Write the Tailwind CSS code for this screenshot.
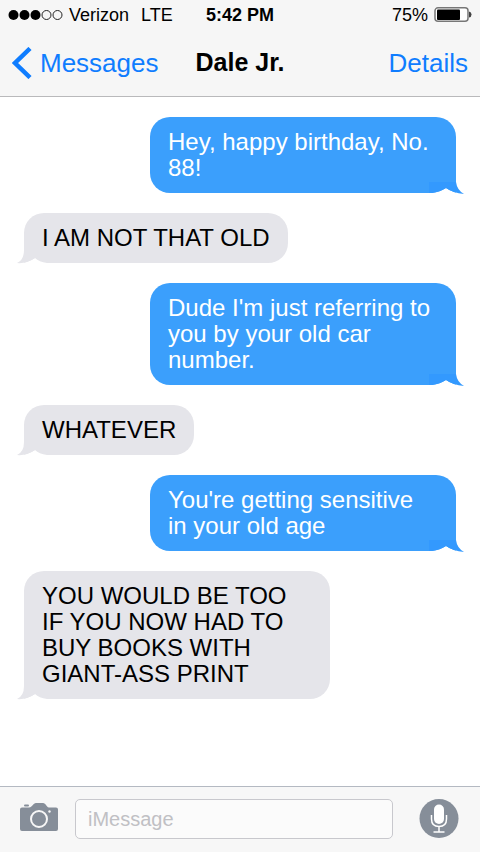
<!DOCTYPE html>
<html lang="en">

<head>
    <meta charset="UTF-8">
    <meta name="viewport" content="width=device-width, initial-scale=1.0">
    <title>Messages - Dale Jr.</title>
    <script src="https://cdn.jsdelivr.net/npm/@tailwindcss/browser@4"></script>
</head>

<body class="flex min-h-screen flex-col bg-white font-['Liberation_Sans',Arial,sans-serif] text-black">
    <header class="border-b border-[#b9b9bb] bg-[#f6f6f6]">
        <!-- status bar -->
        <div class="grid h-[30px] grid-cols-[1fr_auto_1fr] items-center px-2 text-lg">
            <div class="flex items-center">
                <svg class="mr-1.5" width="55" height="12" viewBox="0 0 55 12">
                    <g fill="#000">
                        <circle cx="5.5" cy="6" r="5" />
                        <circle cx="16.5" cy="6" r="5" />
                        <circle cx="27.5" cy="6" r="5" />
                    </g>
                    <g fill="none" stroke="#222">
                        <circle cx="38.5" cy="6" r="4.5" />
                        <circle cx="49.5" cy="6" r="4.5" />
                    </g>
                </svg>
                <span class="mr-3">Verizon</span>
                <span>LTE</span>
            </div>
            <span class="font-bold">5:42 PM</span>
            <div class="flex items-center justify-end gap-1.5">
                <span>75%</span>
                <svg width="38" height="16" viewBox="0 1 38 16">
                    <rect x="1" y="1.8" width="33" height="13.500" rx="3" fill="#fff" stroke="#777" stroke-width="1.5" />
                    <rect x="3" y="3.500" width="23" height="10.500" rx="1" fill="#000" />
                    <path d="M35 5.500Q37.500 6 37.500 8.500T35 11.500Z" fill="#444" />
                </svg>
            </div>
        </div>
        <nav class="grid h-[66px] grid-cols-[1fr_auto_1fr] items-center px-3 text-[26px] text-[#0f7dff]">
            <a href="#" class="flex items-center gap-2">
                <svg width="20" height="32" viewBox="0 0 20 32" fill="none" stroke="#0f7dff" stroke-width="4.500">
                    <path d="M18 1.500L3 16L18 30.500" />
                </svg>
                <span>Messages</span>
            </a>
            <h1 class="text-[25px] font-bold text-black">Dale Jr.</h1>
            <a href="#" class="justify-self-end">Details</a>
        </nav>
    </header>

    <main class="flex flex-1 flex-col items-start gap-5 px-6 py-5 text-2xl leading-[26px]">
        <p class="relative max-w-[306px] self-end rounded-[20px] rounded-br-none bg-[#3b9ffc] px-[18px] py-3 text-white">
            Hey, happy birthday, No. 88!
            <svg class="absolute -right-[9px] -bottom-px" width="36" height="12" viewBox="0 0 36 12">
                <path d="M3 12V11Q11 10 17 6Q24 11 35 12Z" fill="#fff" />
                <path d="M0 0H27Q28 8 35 12Q24 11 17 6Q11 10 3 11H0Z" fill="#3399fe" />
            </svg>
        </p>
        <p class="relative max-w-[306px] rounded-[20px] rounded-bl-none bg-[#e5e5ea] px-[18px] py-3">
            I AM NOT THAT OLD
            <svg class="absolute -bottom-px -left-[7px]" width="30" height="14" viewBox="0 0 30 14">
                <path d="M0 14Q11 13 18 8Q22 12 30 13V14Z" fill="#fff" />
                <path d="M7 0Q7 10 0 13Q9 14 18 8L12 0Z" fill="#e5e5ea" />
            </svg>
        </p>
        <p class="relative max-w-[306px] self-end rounded-[20px] rounded-br-none bg-[#3b9ffc] px-[18px] py-3 text-white">
            Dude I'm just referring to you by your old car number.
            <svg class="absolute -right-[9px] -bottom-px" width="36" height="12" viewBox="0 0 36 12">
                <path d="M3 12V11Q11 10 17 6Q24 11 35 12Z" fill="#fff" />
                <path d="M0 0H27Q28 8 35 12Q24 11 17 6Q11 10 3 11H0Z" fill="#3399fe" />
            </svg>
        </p>
        <p class="relative max-w-[306px] rounded-[20px] rounded-bl-none bg-[#e5e5ea] px-[18px] py-3">
            WHATEVER
            <svg class="absolute -bottom-px -left-[7px]" width="30" height="14" viewBox="0 0 30 14">
                <path d="M0 14Q11 13 18 8Q22 12 30 13V14Z" fill="#fff" />
                <path d="M7 0Q7 10 0 13Q9 14 18 8L12 0Z" fill="#e5e5ea" />
            </svg>
        </p>
        <p class="relative max-w-[306px] self-end rounded-[20px] rounded-br-none bg-[#3b9ffc] px-[18px] py-3 text-white">
            You're getting sensitive in your old age
            <svg class="absolute -right-[9px] -bottom-px" width="36" height="12" viewBox="0 0 36 12">
                <path d="M3 12V11Q11 10 17 6Q24 11 35 12Z" fill="#fff" />
                <path d="M0 0H27Q28 8 35 12Q24 11 17 6Q11 10 3 11H0Z" fill="#3399fe" />
            </svg>
        </p>
        <p class="relative max-w-[306px] rounded-[20px] rounded-bl-none bg-[#e5e5ea] px-[18px] py-3">
            YOU WOULD BE TOO IF YOU NOW HAD TO BUY BOOKS WITH GIANT-ASS PRINT
            <svg class="absolute -bottom-px -left-[7px]" width="30" height="14" viewBox="0 0 30 14">
                <path d="M0 14Q11 13 18 8Q22 12 30 13V14Z" fill="#fff" />
                <path d="M7 0Q7 10 0 13Q9 14 18 8L12 0Z" fill="#e5e5ea" />
            </svg>
        </p>
    </main>

    <form class="flex items-center border-t border-[#b4b9c2] bg-[#f7f7f7] pt-3 pr-[21px] pb-[13px] pl-5">
        <button type="button" aria-label="Camera" class="mr-[17px] mb-1">
            <svg width="38" height="30" viewBox="0 0 38 30">
                <path d="M2 5.500H9C13 5 13 1 16 1H23C26 1 26 5 29 5.500H36Q38 5.500 38 7.500V27Q38 29 36 29H2Q0 29 0 27V7.500Q0 5.500 2 5.500Z"
                    fill="#868e99" />
                <rect x="4" y="2.500" width="5" height="2" rx="1" fill="#868e99" />
                <circle cx="19" cy="17" r="8" fill="none" stroke="#f7f7f7" stroke-width="2" />
                <circle cx="29.500" cy="9.500" r="1.200" fill="#f7f7f7" />
            </svg>
        </button>
        <input type="text" aria-label="Message" placeholder="iMessage"
            class="h-10 min-w-0 flex-1 rounded-[5px] border border-[#c8c8cd] bg-[#fbfbfb] px-3 text-xl placeholder:text-[#c0c0c4]">
        <button type="button" aria-label="Record audio" class="ml-[26px]">
            <svg width="40" height="40" viewBox="0 0 40 40">
                <circle cx="20" cy="19.500" r="19.500" fill="#868e99" />
                <rect x="15" y="5.500" width="10" height="19.500" rx="5" fill="#fff" />
                <path d="M12.500 16V20Q12.500 27.500 20 27.500T27.500 20V16M20 27.500V33M14.500 33H25.500" fill="none"
                    stroke="#fff" stroke-width="1.500" />
            </svg>
        </button>
    </form>
</body>

</html>
